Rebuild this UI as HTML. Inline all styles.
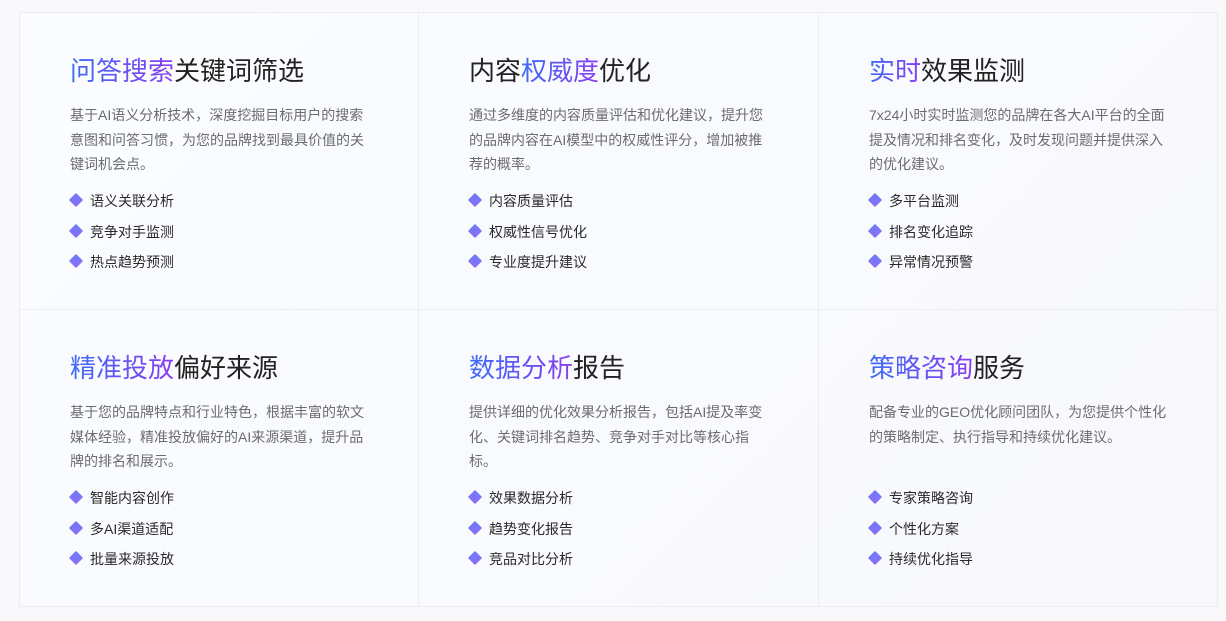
<!DOCTYPE html>
<html><head><meta charset="utf-8"><style>
*{margin:0;padding:0;box-sizing:border-box}
body{width:1226px;height:621px;background:#f9f9fc;font-family:"Liberation Sans","Noto Sans CJK SC",sans-serif;overflow:hidden;position:relative}
.grid{position:absolute;left:19px;top:12px;width:1199px;height:595px;border:1px solid #ebedf2;display:grid;grid-template-columns:399px 400px 398px;grid-template-rows:297px 296px;background:linear-gradient(135deg,#fafcfe,#f8f8fc)}
.c{position:relative;border-right:1px solid #ebedf2;border-bottom:1px solid #ebedf2;padding-left:50px}
.c:nth-child(3n){border-right:none}
.c:nth-child(n+4){border-bottom:none}
h2{position:absolute;left:50px;top:41px;font-size:26px;font-weight:400;color:#222;line-height:34px;white-space:nowrap}
h2 span{background:linear-gradient(90deg,#3d6cf6,#8a3df2);-webkit-background-clip:text;background-clip:text;color:transparent}
p{position:absolute;left:50px;top:90px;width:300px;font-size:14px;line-height:24.5px;color:#6b6b72}
ul{position:absolute;left:50px;top:177px;list-style:none}
li{height:30.5px;line-height:22px;font-size:14px;color:#2a2a2a;padding-left:20px;position:relative}
li:before{content:"";position:absolute;left:1px;top:5px;width:10px;height:10px;background:linear-gradient(135deg,#6a7cf8,#8e6df5);transform:rotate(45deg);border-radius:1px}
</style></head><body>
<div class="grid">
<div class="c"><h2><span>问答搜索</span>关键词筛选</h2><p>基于AI语义分析技术，深度挖掘目标用户的搜索意图和问答习惯，为您的品牌找到最具价值的关键词机会点。</p><ul><li>语义关联分析</li><li>竞争对手监测</li><li>热点趋势预测</li></ul></div>
<div class="c"><h2>内容<span>权威度</span>优化</h2><p>通过多维度的内容质量评估和优化建议，提升您的品牌内容在AI模型中的权威性评分，增加被推荐的概率。</p><ul><li>内容质量评估</li><li>权威性信号优化</li><li>专业度提升建议</li></ul></div>
<div class="c"><h2><span>实时</span>效果监测</h2><p>7x24小时实时监测您的品牌在各大AI平台的全面提及情况和排名变化，及时发现问题并提供深入的优化建议。</p><ul><li>多平台监测</li><li>排名变化追踪</li><li>异常情况预警</li></ul></div>
<div class="c"><h2><span>精准投放</span>偏好来源</h2><p>基于您的品牌特点和行业特色，根据丰富的软文媒体经验，精准投放偏好的AI来源渠道，提升品牌的排名和展示。</p><ul><li>智能内容创作</li><li>多AI渠道适配</li><li>批量来源投放</li></ul></div>
<div class="c"><h2><span>数据分析</span>报告</h2><p>提供详细的优化效果分析报告，包括AI提及率变化、关键词排名趋势、竞争对手对比等核心指标。</p><ul><li>效果数据分析</li><li>趋势变化报告</li><li>竞品对比分析</li></ul></div>
<div class="c"><h2><span>策略咨询</span>服务</h2><p>配备专业的GEO优化顾问团队，为您提供个性化的策略制定、执行指导和持续优化建议。</p><ul><li>专家策略咨询</li><li>个性化方案</li><li>持续优化指导</li></ul></div>
</div>
</body></html>
